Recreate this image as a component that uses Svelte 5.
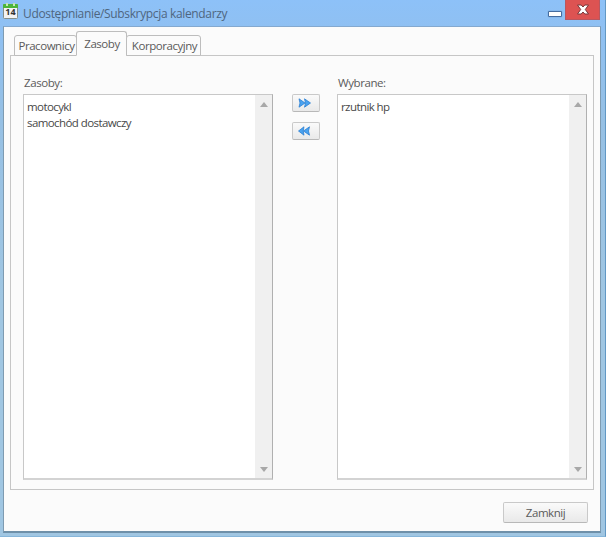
<script>
  let tabs = ["Pracownicy", "Zasoby", "Korporacyjny"];
  let active = "Zasoby";

  let available = ["motocykl", "samochód dostawczy"];
  let chosen = ["rzutnik hp"];
  let selected = null;

  const add = () => {
    if (available.includes(selected)) {
      available = available.filter((el) => el !== selected);
      chosen = [...chosen, selected];
    }
  };

  const remove = () => {
    if (chosen.includes(selected)) {
      chosen = chosen.filter((el) => el !== selected);
      available = [...available, selected];
    }
  };
</script>

<style>
  :global(body) {
    overflow: hidden;
  }

  .window {
    box-sizing: border-box;
    width: 606px;
    height: 537px;
    padding: 0 4px 4px 3px;
    display: flex;
    flex-direction: column;
    background: linear-gradient(#8dc1f8, #8fc0f2 28px, #96c0e4 120px, #a0c6e2 300px, #a0c6e2);
    border-right: 1px solid #6298c4;
    border-bottom: 1px solid #86b6da;
    font-family: "Open Sans", "Noto Sans", sans-serif;
    font-size: 11.5px;
    letter-spacing: -0.45px;
    color: #5a5a5a;
  }

  button {
    font: inherit;
    letter-spacing: inherit;
    color: inherit;
    padding: 0;
  }

  .titlebar {
    height: 26px;
    flex: none;
    display: flex;
    align-items: flex-start;
  }
  .calendar {
    margin-top: 3px;
    width: 15px;
    height: 16px;
  }
  .calendar text {
    font: bold 9px "Open Sans", sans-serif;
    letter-spacing: 0;
    fill: #333;
  }
  .title {
    flex: 1;
    margin: 6px 0 0 5px;
    font-size: 12px;
    line-height: 16px;
    letter-spacing: -0.35px;
    color: #4e6680;
    white-space: nowrap;
  }
  .minimize {
    box-sizing: border-box;
    width: 14px;
    height: 6px;
    margin: 11px 3px 0 0;
    background: #fff;
    border: 1.5px solid #456da0;
    border-radius: 1px;
    box-shadow: 0 0 1px #456da0;
  }
  .close {
    box-sizing: border-box;
    width: 35px;
    height: 20px;
    margin-right: 1px;
    border: 1px solid #b85760;
    border-top: 0;
    background: #dd5352;
    display: flex;
    align-items: center;
    justify-content: center;
  }

  .content {
    flex: 1;
    display: flex;
    flex-direction: column;
    background: #fbfbfb;
    border: 1px solid #7e9bb1;
    border-top-color: #84a9cf;
    border-bottom: 2px solid #6e90a9;
    padding: 4px 6px 8px;
  }

  .tabs {
    display: flex;
    align-items: flex-end;
    height: 25px;
    margin: 0 0 -1px 4px;
    position: relative;
  }
  .tab {
    box-sizing: border-box;
    height: 21px;
    border: 1px solid #bdbdbd;
    border-radius: 3px 3px 0 0;
    background: #fbfbfb;
    line-height: 20px;
    padding-left: 2px;
    width: 63px;
    margin-right: -1px;
    white-space: nowrap;
  }
  .tab:last-child {
    width: 75px;
  }
  .tab.active {
    height: 25px;
    width: 51px;
    border-bottom-color: #fbfbfb;
    padding-left: 1px;
  }

  .panel {
    box-sizing: border-box;
    height: 435px;
    border: 1px solid #c6c6c6;
    display: flex;
    padding: 18px 6px 0 12px;
  }
  .column {
    flex: none;
    width: 250px;
  }
  .label {
    height: 20px;
    line-height: 18px;
    padding-left: 1px;
    letter-spacing: -0.42px;
  }
  .list {
    box-sizing: border-box;
    height: 386px;
    border: 1px solid #c8c8c8;
    border-right: 1px solid #b0b0b0;
    border-bottom: 2px solid #d3d3d3;
    background: #fff;
    display: flex;
  }
  .items {
    flex: 1;
    padding: 4px 3px;
    letter-spacing: -0.58px;
    color: #484848;
  }
  .item {
    line-height: 16px;
    cursor: default;
  }
  .scrollbar {
    width: 17px;
    background: #f0f0f0;
    display: flex;
    flex-direction: column;
    justify-content: space-between;
    align-items: center;
    padding: 7px 0 6px;
    box-sizing: border-box;
  }
  .scrollbar svg {
    display: block;
    fill: #a8a8a8;
  }
  .moves {
    flex: none;
    width: 64px;
    padding: 20px 0 0 1px;
    box-sizing: border-box;
    display: flex;
    flex-direction: column;
    align-items: center;
    gap: 10px;
  }
  .moves button,
  .done {
    box-sizing: border-box;
    border: 1px solid #c9c9c9;
    border-bottom-color: #b8b8b8;
    border-radius: 2px;
    background: linear-gradient(#fafafa, #e9e9e9);
  }
  .moves button {
    width: 28px;
    height: 18px;
    display: flex;
    align-items: center;
    padding-left: 5px;
  }
  .moves path {
    fill: #4aa3f0;
    stroke: #2c7fd2;
    stroke-width: 0.8;
  }
  .done {
    width: 85px;
    height: 21px;
    margin: 12px 6px 0 auto;
    line-height: 18px;
  }
</style>

<div class="window">
  <div class="titlebar">
    <svg class="calendar" viewBox="0 0 15 16">
      <rect x="0.5" y="1.5" width="14" height="14" rx="1" fill="#f3f3f3" stroke="#858f89" />
      <path d="M0 5V2Q0 1 1 1H14Q15 1 15 2V5Z" fill="#4cb53a" />
      <rect x="3" y="0" width="2" height="3" fill="#c4e6b5" />
      <rect x="10" y="0" width="2" height="3" fill="#c4e6b5" />
      <text x="7.5" y="12" text-anchor="middle">14</text>
    </svg>
    <div class="title">Udostępnianie/Subskrypcja kalendarzy</div>
    <div class="minimize"></div>
    <div class="close">
      <svg width="12" height="11" viewBox="0 0 12 11">
        <path d="M0.5 1H4.2L6 3L7.8 1H11.5L8.3 5.5L11.5 10H7.8L6 8L4.2 10H0.5L3.7 5.5Z" fill="#fff" stroke="#793739" stroke-linejoin="round" />
      </svg>
    </div>
  </div>

  <div class="content">
    <div class="tabs">
      {#each tabs as tab}
        <button class="tab" class:active={tab === active} on:click={() => (active = tab)}>{tab}</button>
      {/each}
    </div>

    <div class="panel">
      <div class="column">
        <div class="label">Zasoby:</div>
        <div class="list">
          <div class="items">
            {#each available as item}
              <!-- svelte-ignore a11y_click_events_have_key_events, a11y_no_static_element_interactions -->
              <div class="item" on:click={() => (selected = item)}>{item}</div>
            {/each}
          </div>
          <div class="scrollbar">
            <svg width="8" height="5"><path d="M0 5L4 0L8 5Z" /></svg>
            <svg width="8" height="5"><path d="M0 0L4 5L8 0Z" /></svg>
          </div>
        </div>
      </div>

      <div class="moves">
        <button on:click={add} aria-label="Dodaj">
          <svg width="14" height="10" viewBox="0 0 14 10">
            <path d="M1 0.8L7 5L1 9.2L2 5ZM6.5 0.8L12.5 5L6.5 9.2L7.5 5Z" />
          </svg>
        </button>
        <button on:click={remove} aria-label="Usuń">
          <svg width="14" height="10" viewBox="0 0 14 10">
            <path d="M6 0.8L0.5 5L6 9.2L5.2 5ZM11.5 0.8L5.5 5L11.5 9.2L10.5 5Z" />
          </svg>
        </button>
      </div>

      <div class="column">
        <div class="label">Wybrane:</div>
        <div class="list">
          <div class="items">
            {#each chosen as item}
              <!-- svelte-ignore a11y_click_events_have_key_events, a11y_no_static_element_interactions -->
              <div class="item" on:click={() => (selected = item)}>{item}</div>
            {/each}
          </div>
          <div class="scrollbar">
            <svg width="8" height="5"><path d="M0 5L4 0L8 5Z" /></svg>
            <svg width="8" height="5"><path d="M0 0L4 5L8 0Z" /></svg>
          </div>
        </div>
      </div>
    </div>

    <button class="done">Zamknij</button>
  </div>
</div>
